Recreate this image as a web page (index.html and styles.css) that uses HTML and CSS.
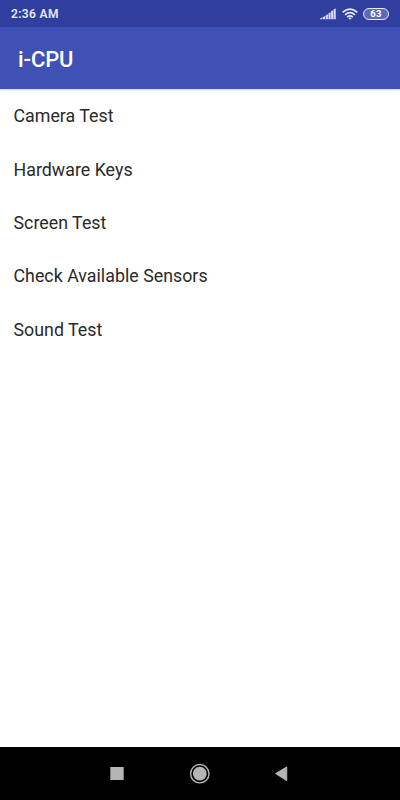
FILE: index.html
```html
<!DOCTYPE html>
<html lang="en">
<head>
<meta charset="utf-8">
<title>i-CPU</title>
<link rel="stylesheet" href="styles.css">
</head>
<body>
<div class="status"><span class="time">2:36 AM</span>
<div class="icons">
<svg width="16" height="12" viewBox="0 0 16 12" fill="#d9ddf3"><path d="M.2 11.2V10.2l2.2-.9v1.9zM3 11.2V9l2.2-.9v3.1zM5.8 11.2V7.2l2.1-.9v4.9zM8.5 11.2V5.2l2.1-.9v6.9zM11.1 11.2V3.2l2.1-.9v8.9zM13.7 11.2V1.3l2-.9v10.8z"/></svg>
<svg class="wifi" width="16" height="12" viewBox="0 0 16 12" fill="none" stroke="#e6e8f5" stroke-width="1.7"><path d="M.7 4.3Q8-2 15.3 4.3M3 6.8Q8 2.6 13 6.8M5.2 9Q8 6.8 10.8 9"/><path d="M6.3 10.1Q8 9 9.7 10.1L8 11.8z" fill="#e6e8f5" stroke="none"/></svg>
<span class="battery">63</span>
</div></div>
<header class="bar">i-CPU</header>
<main class="list">
<div class="row">Camera Test</div>
<div class="row">Hardware Keys</div>
<div class="row">Screen Test</div>
<div class="row">Check Available Sensors</div>
<div class="row">Sound Test</div>
</main>
<nav class="nav">
<svg width="400" height="53" viewBox="0 0 400 53"><rect x="110.3" y="20" width="13.4" height="13" rx=".5" fill="#b5b5b5"/><circle cx="199.8" cy="26.7" r="9.2" fill="none" stroke="#b5b5b5" stroke-width="1.4"/><circle cx="199.8" cy="26.7" r="6.9" fill="#b5b5b5"/><path d="M275.5 26.6l11.3-6.8v14z" fill="#b5b5b5" stroke="#b5b5b5" stroke-width=".8" stroke-linejoin="round"/></svg>
</nav>
</body>
</html>
```
FILE: styles.css
```css
body{margin:0;height:800px;display:flex;flex-direction:column;background:#fff;font-family:Roboto,sans-serif;overflow:hidden}
.status{height:27px;background:#303f9f;display:flex;align-items:center;justify-content:space-between;padding:0 11px;color:#e6e8f5}
.time{font-size:12px;font-weight:600;letter-spacing:.35px;padding-top:1px}
.icons{display:flex;align-items:center}
.wifi{margin:0 5px 0 6px}
.battery{box-sizing:border-box;width:26px;height:12px;border:1.2px solid #e6e8f5;border-radius:6px;font-size:9.5px;line-height:10px;font-weight:700;letter-spacing:.3px;text-align:center;color:#fff;background:#5e69b8}
.bar{height:62px;box-sizing:border-box;background:#3f51b5;color:#fff;font-size:22px;font-weight:500;line-height:66px;letter-spacing:-.1px;padding-left:18px;box-shadow:0 1px 2px rgba(48,63,159,.25)}
.list{flex:1;padding-top:.4px}
.row{height:53.35px;line-height:54px;padding-left:13.5px;font-size:17.8px;letter-spacing:.02px;color:#2a2a2a}
.nav{height:53px;background:#000}
.nav svg{display:block}
```
